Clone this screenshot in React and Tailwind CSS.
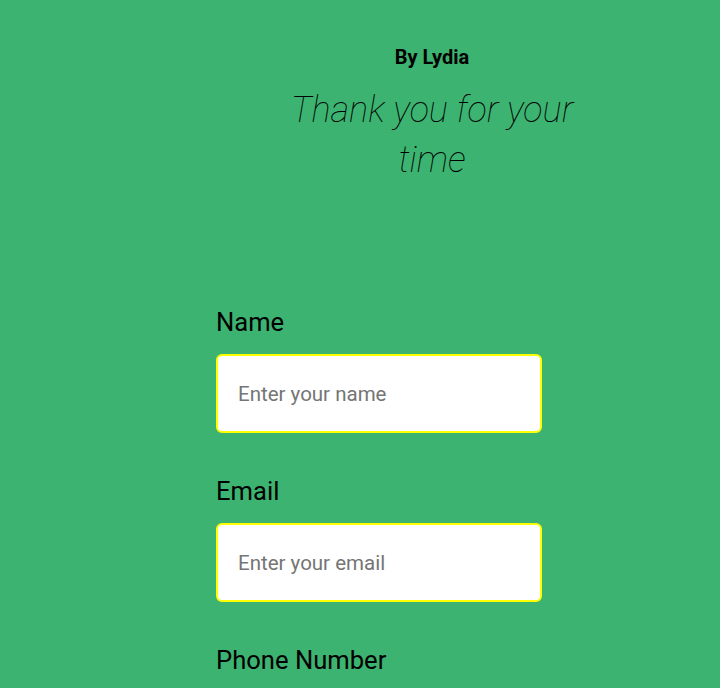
export default function App() {
  return (
    <div className="min-h-screen bg-[#3cb371] font-['Roboto',sans-serif] text-black">
      <div className="ml-[216px] w-[432px] pt-[44px] flex flex-col items-center text-center">
        <h3 className="text-[20px] font-bold leading-[26px]">By Lydia</h3>
        <h1 className="mt-[15px] w-[300px] text-[36px] leading-[50px] font-thin italic">
          Thank you for your time
        </h1>
      </div>

      <form className="ml-[216px] mt-[123px] flex flex-col">
        <div className="mb-[44px]">
          <label className="block text-[25.6px] leading-[28px] mb-[18px]">Name</label>
          <input
            type="text"
            placeholder="Enter your name"
            className="w-[326px] h-[79px] px-[20px] bg-white border-2 border-[#ffff00] rounded-[6px] text-[20.5px] placeholder:text-[#757575] outline-none"
          />
        </div>
        <div className="mb-[44px]">
          <label className="block text-[25.6px] leading-[28px] mb-[18px]">Email</label>
          <input
            type="email"
            placeholder="Enter your email"
            className="w-[326px] h-[79px] px-[20px] bg-white border-2 border-[#ffff00] rounded-[6px] text-[20.5px] placeholder:text-[#757575] outline-none"
          />
        </div>
        <div className="mb-[44px]">
          <label className="block text-[25.6px] leading-[28px] mb-[18px]">Phone Number</label>
          <input
            type="tel"
            placeholder="Enter your phone number"
            className="w-[326px] h-[79px] px-[20px] bg-white border-2 border-[#ffff00] rounded-[6px] text-[20.5px] placeholder:text-[#757575] outline-none"
          />
        </div>
      </form>
    </div>
  );
}
